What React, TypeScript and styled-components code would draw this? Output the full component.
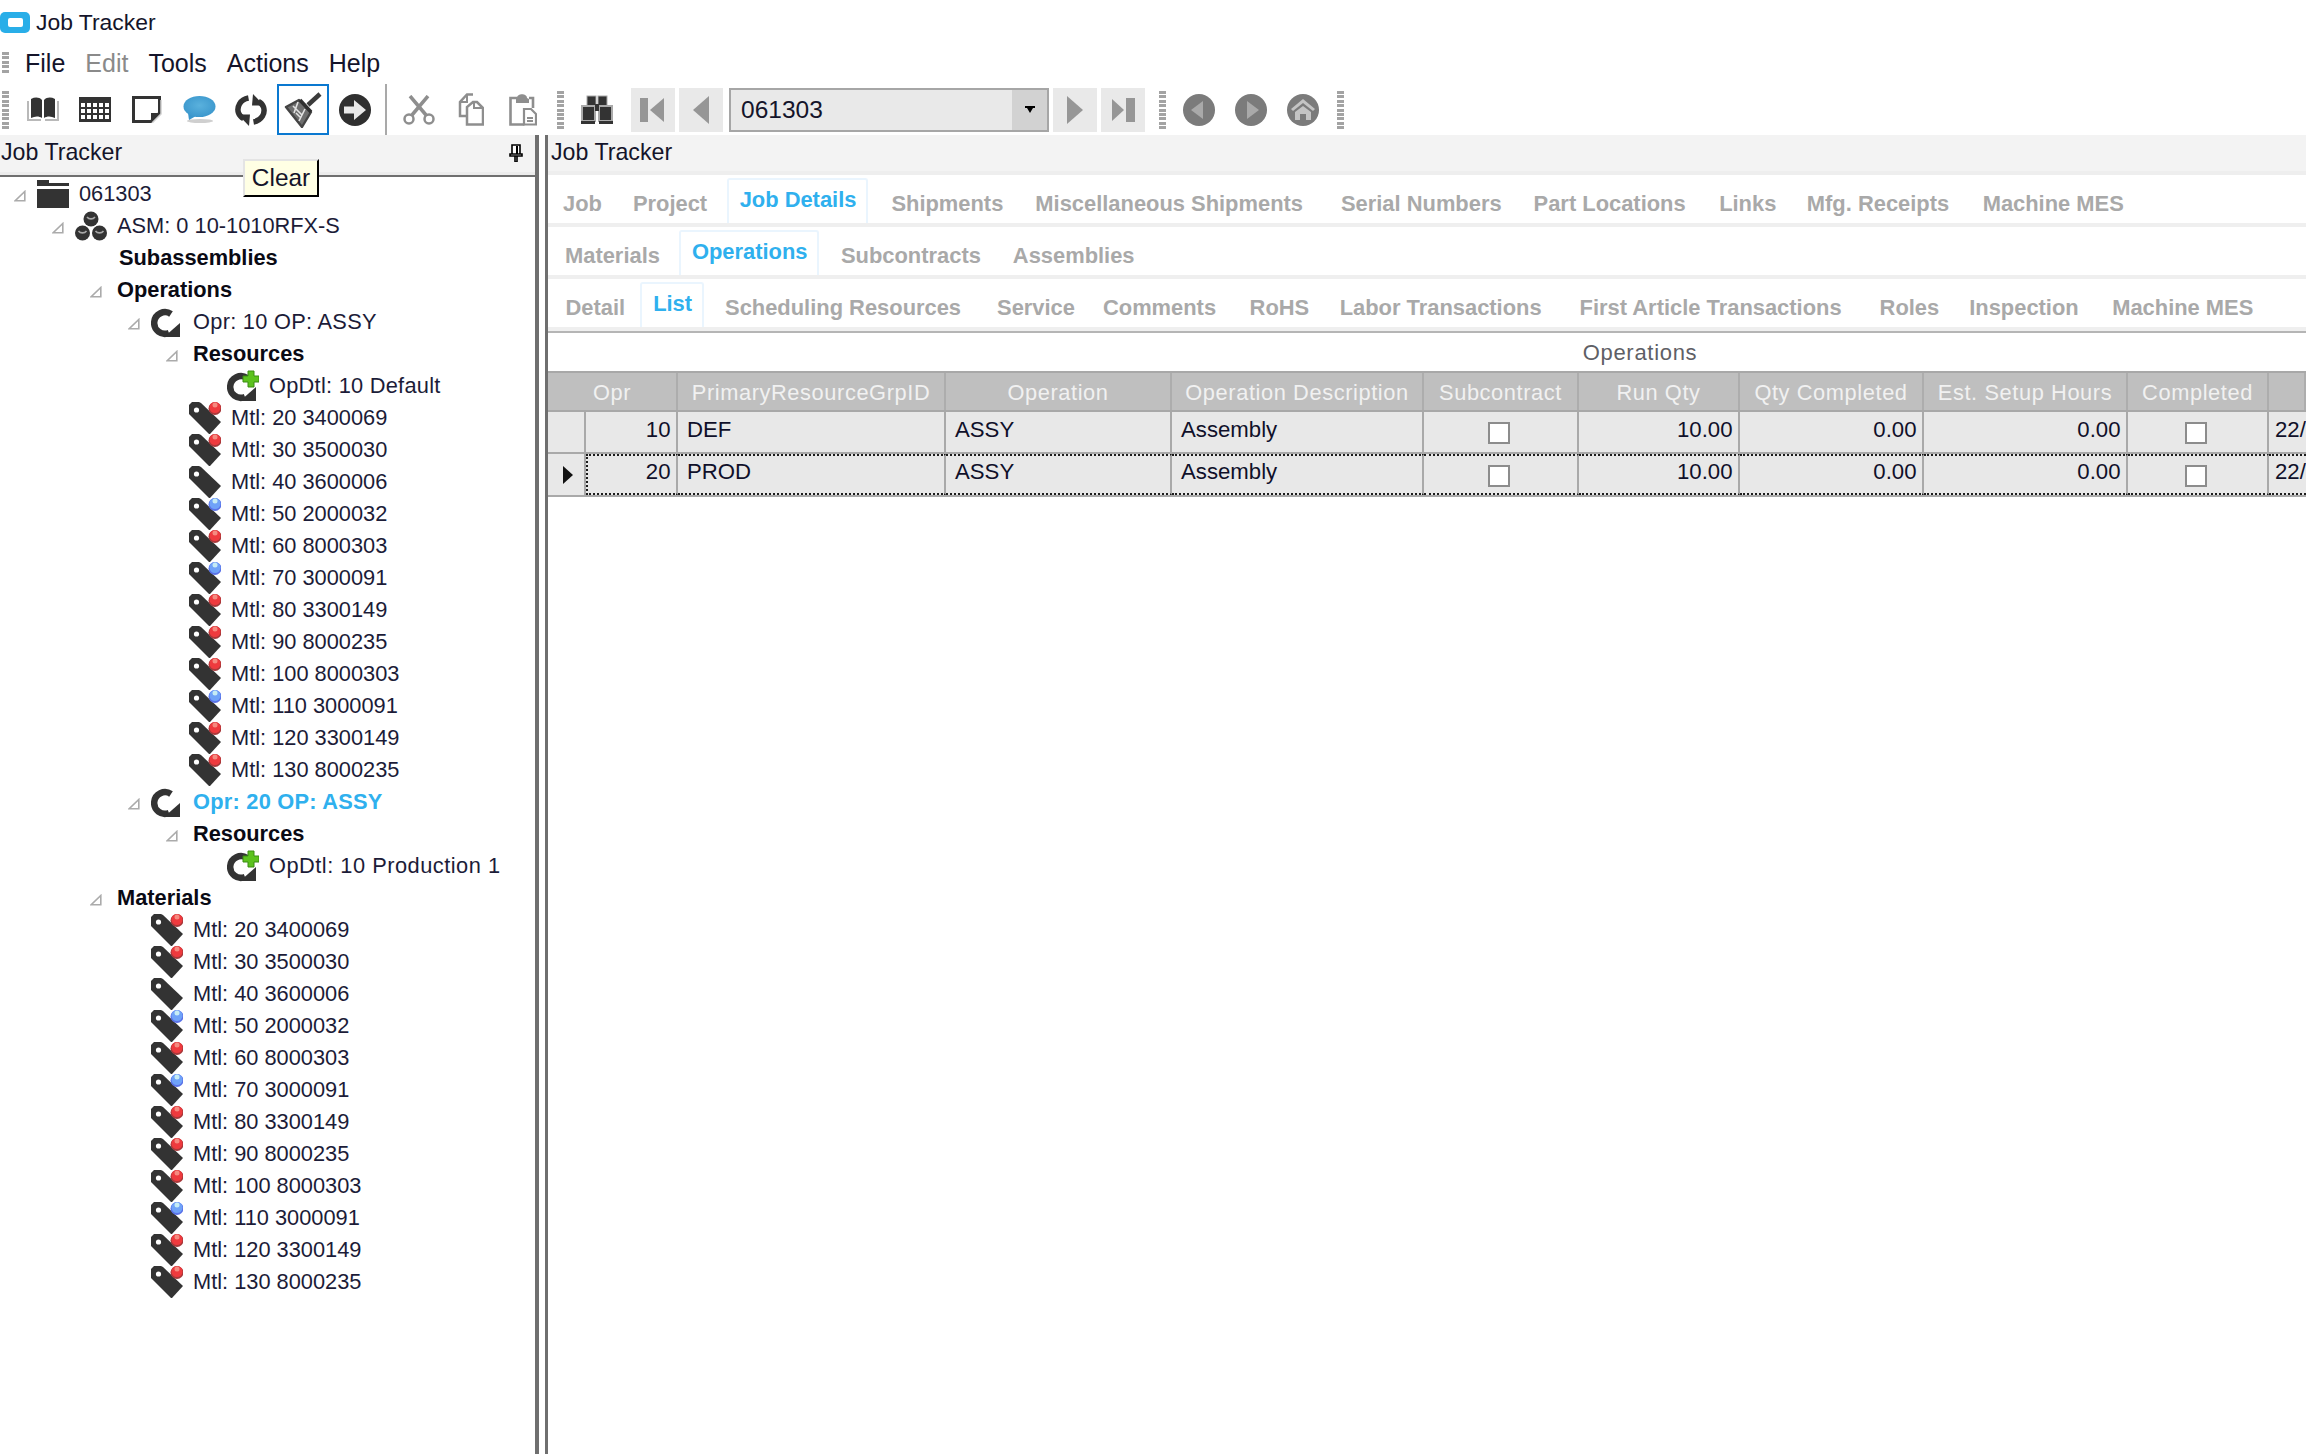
import React from 'react';
import styled, { createGlobalStyle, css } from 'styled-components';

type IconName = 'folder' | 'assembly' | 'opr' | 'opdtl' | 'mtl';
type Dot = 'red' | 'blue' | 'none';

interface TreeItem {
	level: number;
	text: string;
	icon?: IconName;
	dot?: Dot;
	bold?: boolean;
	active?: boolean;
	expander?: boolean;
	tracking?: number;
	indent?: number;
}

// label and the extra left margin the real tab strip leaves before it
type TabDef = [string, number];

const GlobalStyle = createGlobalStyle`
  html, body {
    margin: 0;
    padding: 0;
    height: 100%;
    background: #fff;
    overflow: hidden;
  }

  body {
    font-family: 'Liberation Sans', Arial, sans-serif;
    color: #14142a;
  }

  * {
    box-sizing: border-box;
  }
`;

const Page = styled.div`
	position: relative;
	width: 2306px;
	height: 1454px;
	display: flex;
	flex-direction: column;
	overflow: hidden;
`;

const TitleBar = styled.div`
	height: 41px;
	display: flex;
	align-items: center;
	gap: 6px;
	font-size: 22.9px;
	padding-top: 3px;
`;

const AppLogo = styled.div`
	width: 30px;
	height: 21px;
	border-radius: 5px;
	background: #29aee8;
	display: flex;
	align-items: center;
	justify-content: center;

	&::after {
		content: '';
		width: 15px;
		height: 9px;
		border-radius: 2px;
		background: #fff;
	}
`;

const MenuBar = styled.div`
	height: 43px;
	display: flex;
	align-items: center;
	padding: 1px 0 0 2px;
	font-size: 25px;
`;

const MenuItem = styled.span<{ $disabled?: boolean }>`
	padding: 0 10px;
	color: ${(p) => (p.$disabled ? '#8a8a8a' : '#14142a')};
`;

const Grip = styled.div<{ $short?: boolean }>`
	flex: none;
	width: 7px;
	height: ${(p) => (p.$short ? '22px' : '38px')};
	margin-right: ${(p) => (p.$short ? '6px' : '0')};
	background: repeating-linear-gradient(to bottom, #a3a3a3 0 3px, #fff 3px 4.4px);
`;

const Toolbar = styled.div`
	height: 51px;
	display: flex;
	align-items: center;
	padding-left: 2px;
`;

const ToolButton = styled.div<{ $selected?: boolean }>`
	flex: none;
	width: 52px;
	height: 51px;
	display: flex;
	align-items: center;
	justify-content: center;
	border: 2px solid ${(p) => (p.$selected ? '#0a78d0' : 'transparent')};
`;

const ToolGroup = styled.div<{ $left: number; $right?: number }>`
	display: flex;
	align-items: center;
	margin-left: ${(p) => p.$left}px;
	margin-right: ${(p) => p.$right ?? 0}px;
`;

const ToolSeparator = styled.div`
	flex: none;
	width: 2px;
	height: 51px;
	margin: 0 6px 0 4px;
	background: #a9a9a9;
`;

const NavButton = styled.div`
	flex: none;
	width: 44px;
	height: 44px;
	background: #e9e9e9;
	display: flex;
	align-items: center;
	justify-content: center;
`;

const Combo = styled.div`
	flex: none;
	width: 320px;
	height: 44px;
	margin: 0 4px 0 6px;
	border: 2px solid #a6a6a6;
	background: #e9e9e9;
	display: flex;
	align-items: stretch;
	font-size: 24.5px;
`;

const ComboValue = styled.div`
	flex: 1;
	padding-left: 10px;
	display: flex;
	align-items: center;
`;

const ComboArrow = styled.div`
	width: 35px;
	background: #d2d2d2;
	display: flex;
	align-items: center;
	justify-content: center;
`;

const Main = styled.div`
	flex: 1;
	display: flex;
	min-height: 0;
`;

const LeftPanel = styled.div`
	flex: none;
	width: 539px;
	border-right: 4px solid #6f6f6f;
	display: flex;
	flex-direction: column;
`;

const RightPanel = styled.div`
	flex: 1;
	min-width: 0;
	margin-left: 6px;
	border-left: 3px solid #6f6f6f;
	display: flex;
	flex-direction: column;
	overflow: hidden;
`;

const PaneHeader = styled.div<{ $dark?: boolean }>`
	flex: none;
	height: ${(p) => (p.$dark ? '42px' : '40px')};
	background: #f3f3f3;
	border-bottom: ${(p) => (p.$dark ? '2px solid #6f6f6f' : '4px solid #eeeeee')};
	box-shadow: ${(p) => (p.$dark ? 'inset 0 -3px 0 #ececec' : 'none')};
	display: flex;
	align-items: center;
	justify-content: space-between;
	padding: ${(p) => (p.$dark ? '0 12px 5px 1px' : '0 14px 2px 3px')};
	font-size: 23.2px;
	color: #14142a;
`;

const Tree = styled.div`
	flex: 1;
	display: flex;
	flex-direction: column;
	padding-top: 1px;
`;

const TreeRow = styled.div<{ $level: number }>`
	flex: none;
	height: 32px;
	display: flex;
	align-items: center;
	padding-left: ${(p) => p.$level * 38 + 14}px;
`;

const ExpanderSlot = styled.div`
	flex: none;
	width: 23px;
	padding-top: 4px;
	display: flex;
`;

const IconSlot = styled.div`
	flex: none;
	width: 42px;
	height: 32px;
	display: flex;
	align-items: center;
`;

const TreeLabel = styled.span<{ $bold?: boolean; $active?: boolean; $indent: number; $tracking: number }>`
	font-size: 21.8px;
	white-space: nowrap;
	margin-left: ${(p) => p.$indent}px;
	font-weight: ${(p) => (p.$bold || p.$active ? 700 : 400)};
	color: ${(p) => (p.$active ? '#2fb0ee' : p.$bold ? '#0a0a14' : '#1c1c38')};
	letter-spacing: ${(p) => p.$tracking}px;
`;

const TabRow = styled.div`
	flex: none;
	height: 52px;
	border-bottom: 4px solid #efefef;
	display: flex;
	align-items: flex-end;
`;

const Tab = styled.div<{ $selected?: boolean; $nudge: number }>`
	flex: none;
	height: 45px;
	font-size: 21.9px;
	font-weight: 700;
	white-space: nowrap;
	display: flex;
	align-items: center;
	${(p) =>
		p.$selected
			? css`
					padding: 0 10px 4px 11px;
					margin: 0 7px 0 ${5 + p.$nudge}px;
					color: #2fb0ee;
					border: 2px solid #eaf5fe;
					border-bottom: none;
					border-radius: 3px 3px 0 0;
			  `
			: css`
					padding: 6px 16px 0;
					margin-left: ${p.$nudge}px;
					color: #a9a9a9;
			  `}
`;

const GridSection = styled.div`
	border-top: 2px solid #b5b5b5;
	flex: 1;
	min-height: 0;
	overflow: hidden;
`;

const Caption = styled.div`
	width: 2184px;
	height: 38px;
	padding-top: 2px;
	display: flex;
	align-items: center;
	justify-content: center;
	font-size: 22px;
	letter-spacing: 0.7px;
	color: #5f5f66;
`;

const gridColumns = css`
	display: grid;
	grid-template-columns: 38px 92px 268px 226px 252px 155px 161px 184px 204px 141px 1fr;
`;

const HeaderRow = styled.div`
	${gridColumns};
	height: 41px;
	background: #bfbfbf;
	border-top: 2px solid #a8a8a8;
	border-bottom: 2px solid #a8a8a8;
`;

const HeaderCell = styled.div<{ $span?: number }>`
	grid-column: span ${(p) => p.$span ?? 1};
	display: flex;
	align-items: center;
	justify-content: center;
	padding-top: 2px;
	font-size: 21.8px;
	letter-spacing: 0.6px;
	color: #f1f1f1;
	white-space: nowrap;
	overflow: hidden;
	border-right: 2px solid #adadad;
`;

const DataRow = styled.div<{ $current?: boolean }>`
	${gridColumns};
	height: ${(p) => (p.$current ? '43px' : '42px')};
	background: #e8e8e8;
	border-bottom: 2px solid #a9a9a9;
`;

const RowHead = styled.div`
	display: flex;
	align-items: center;
	justify-content: center;
	border-right: 2px solid #a9a9a9;
	padding-left: 4px;
`;

const Cell = styled.div<{ $right?: boolean; $current?: boolean; $first?: boolean }>`
	display: flex;
	align-items: center;
	justify-content: ${(p) => (p.$right ? 'flex-end' : 'flex-start')};
	padding: 0 ${(p) => (p.$right ? '5.5px' : '10px')} 5px ${(p) => (p.$right ? '4px' : '9px')};
	font-size: 22.2px;
	color: #10102a;
	white-space: nowrap;
	overflow: hidden;
	border-right: 2px solid #a9a9a9;
	${(p) =>
		p.$current &&
		css`
			border-top: 2px dotted #1c1c1c;
			border-bottom: 2px dotted #1c1c1c;
		`}
	${(p) => p.$first && 'border-left: 2px dotted #1c1c1c;'}
`;

const CheckCell = styled(Cell)`
	justify-content: center;
	padding: 2px 3px 0 0;
`;

const EdgeCell = styled(Cell)`
	padding: 0 0 5px 6px;
	border-right: none;
`;

const CheckBox = styled.div`
	width: 22px;
	height: 22px;
	background: #fff;
	border: 2px solid #8c8c8c;
`;

const Tooltip = styled.div`
	position: absolute;
	left: 243px;
	top: 159px;
	width: 76px;
	height: 38px;
	background: #ffffe4;
	border-top: 2px solid #e4e4e4;
	border-left: 2px solid #e4e4e4;
	border-right: 2px solid #000;
	border-bottom: 2px solid #000;
	display: flex;
	align-items: center;
	justify-content: center;
	font-size: 24.4px;
	color: #14142a;
`;

const dark = '#333333';
const grey = '#8e8e8e';

const Dotted = ({ dot }: { dot?: Dot }) => {
	if (!dot || dot === 'none') return null;
	const red = dot === 'red';
	return (
		<>
			<circle cx="26" cy="6.5" r="6.5" fill={red ? '#a8383a' : '#5a72e8'} />
			<circle cx="26" cy="5.5" r="5.5" fill={red ? '#ee3a3e' : '#6fa2f8'} />
			<circle cx="26" cy="3" r="2.5" fill={red ? '#f58a80' : '#c6ecf4'} />
		</>
	);
};

const TreeIcon = ({ name, dot }: { name: IconName; dot?: Dot }) => {
	if (name === 'folder') {
		return (
			<svg width="32" height="28" viewBox="0 0 32 28">
				<path d="M0 0h12v3h20v3H0z" fill={dark} />
				<rect x="0" y="9" width="32" height="19" fill={dark} />
			</svg>
		);
	}
	if (name === 'assembly') {
		return (
			<svg width="32" height="30" viewBox="0 0 32 30">
				{[
					[16, 8],
					[7.5, 22],
					[24.5, 22],
				].map(([x, y]) => (
					<g key={x}>
						<circle cx={x} cy={y} r="7.5" fill={dark} />
						<path d={`M${x - 4} ${y - 2}c2 2.5 6 2.5 8 0`} fill="none" stroke="#a8a8a8" strokeWidth="1.6" />
					</g>
				))}
			</svg>
		);
	}
	if (name === 'mtl') {
		return (
			<svg width="32" height="32" viewBox="0 0 32 32">
				<path d="M3 0h7l2 1 20 19-11 12h-1L0 12V3z" fill={dark} />
				<circle cx="7.5" cy="8" r="2.6" fill="#fff" />
				<Dotted dot={dot} />
			</svg>
		);
	}
	return (
		<svg width="32" height="32" viewBox="0 0 32 32">
			<path d="M20 8A10.8 10.8 0 1 0 18 27" fill="none" stroke={dark} strokeWidth="6.5" />
			<path d="M29 17v14H13z" fill={dark} />
			{name === 'opdtl' && (
				<path d="M21 1h6v5h5v6h-5v5h-6v-5h-5V6h5z" fill="#5cc21e" stroke="#3a8c12" strokeWidth="1" />
			)}
		</svg>
	);
};

const Expander = () => (
	<svg width="12" height="12" viewBox="0 0 12 12">
		<path d="M10.8 1.5v9.3H1.2z" fill="#fff" stroke="#ababab" strokeWidth="1.6" />
	</svg>
);

const BookIcon = () => (
	<svg width="32" height="25" viewBox="0 0 32 25">
		<path d="M1 4v19h13" fill="none" stroke="#b9b9b9" strokeWidth="2" />
		<path d="M31 4v19H18" fill="none" stroke="#b9b9b9" strokeWidth="2" />
		<path d="M4 2c4-2 8-2 11 1v18c-3-2-7-2-11 0z" fill={dark} />
		<path d="M28 2c-4-2-8-2-11 1v18c3-2 7-2 11 0z" fill={dark} />
	</svg>
);

const GridIcon = () => (
	<svg width="32" height="25" viewBox="0 0 32 25">
		<rect width="32" height="25" fill={dark} />
		{[6, 12, 18].map((y) =>
			[2, 8, 14, 20, 26].map((x) => <rect key={`${x}-${y}`} x={x} y={y} width="4" height="4" fill="#fff" />),
		)}
	</svg>
);

const NoteIcon = () => (
	<svg width="30" height="27" viewBox="0 0 30 27">
		<path d="M1.5 1.5h26V17l-8.5 8.5H1.5z" fill="#fff" stroke={dark} strokeWidth="3" />
		<path d="M19 25v-8h9z" fill={dark} />
		<path d="M29 4v14l-9 9" fill="none" stroke="#d0d0d0" strokeWidth="1.5" />
	</svg>
);

const BubbleIcon = () => (
	<svg width="33" height="27" viewBox="0 0 33 27">
		<defs>
			<radialGradient id="bubble" cx="50%" cy="45%" r="60%">
				<stop offset="0%" stopColor="#5ab1dd" />
				<stop offset="100%" stopColor="#3a96cc" />
			</radialGradient>
		</defs>
		<ellipse cx="17" cy="25" rx="13" ry="2" fill="#cfcfcf" />
		<path d="M5 17l1 7 7-4z" fill="#3a96cc" />
		<ellipse cx="16.5" cy="10.5" rx="16" ry="10.5" fill="url(#bubble)" />
	</svg>
);

const RefreshIcon = () => (
	<svg width="32" height="32" viewBox="0 0 32 32">
		<path d="M13.5 4C5 5.500 1.500 13 3.500 19c1 2.500 3 4.500 5 5.500" fill="none" stroke={dark} strokeWidth="5.5" />
		<path d="M3 20.5h12L14 32z" fill={dark} />
		<path d="M18.5 28c8.500-1.500 12-9 10-15-1-2.500-3-4.500-5-5.500" fill="none" stroke={dark} strokeWidth="5.5" />
		<path d="M29 11.5H17L18 0z" fill={dark} />
	</svg>
);

const BroomIcon = () => (
	<svg width="38" height="37" viewBox="0 0 38 37">
		<path d="M36 3L24 14" stroke="#3b3b3b" strokeWidth="4.5" />
		<path d="M15 9l12 12-9 15L2 16z" fill="#6e6e6e" stroke="#444" strokeWidth="2.4" strokeLinejoin="round" />
		<path d="M9 15l9 9M12 22l5 5M14 11l-4 11M21 18L15 30" stroke="#e2e2e2" strokeWidth="1.6" />
		<path d="M16 9l11 12" stroke="#2f2f2f" strokeWidth="3.5" />
	</svg>
);

const ArrowCircleIcon = () => (
	<svg width="32" height="32" viewBox="0 0 32 32">
		<circle cx="16" cy="16" r="16" fill="#2f2f2f" />
		<path d="M5 12.5h10V6l12 10-12 10v-6.5H5z" fill="#e9e9e9" />
	</svg>
);

const ScissorsIcon = () => (
	<svg width="32" height="30" viewBox="0 0 32 30">
		<g fill="none" stroke={grey}>
			<circle cx="6" cy="24" r="4.5" strokeWidth="2.5" />
			<circle cx="26" cy="24" r="4.5" strokeWidth="2.5" />
			<path d="M9 20L25 1M23 20L7 1" strokeWidth="3.5" />
		</g>
	</svg>
);

const CopyIcon = () => (
	<svg width="26" height="33" viewBox="0 0 26 33">
		<path d="M15 1.5H9L2 9v14h6" fill="#fff" stroke={grey} strokeWidth="2.5" />
		<path d="M9 1.5V9H2" fill="none" stroke={grey} strokeWidth="2" />
		<path d="M15 9h4l6 6v16.5H9V14z" fill="#fff" stroke={grey} strokeWidth="2.5" />
		<path d="M16 9v6h9" fill="none" stroke={grey} strokeWidth="2" />
	</svg>
);

const PasteIcon = () => (
	<svg width="28" height="33" viewBox="0 0 28 33">
		<path d="M8 5H1.5v26.5h14M20 5h4v10" fill="none" stroke={grey} strokeWidth="2.6" />
		<path d="M8 5c0-5 10-5 10 0l2 1v4H7V6z" fill={grey} />
		<path d="M15 16h7l5 5v10.5H15z" fill="#fff" stroke={grey} strokeWidth="2.2" />
		<path d="M18 25h6M18 28h6" stroke={grey} strokeWidth="2" />
	</svg>
);

const BinocularsIcon = () => (
	<svg width="32" height="29" viewBox="0 0 32 29">
		<rect x="6" y="1" width="9" height="10" fill={dark} stroke="#aaa" strokeWidth="1" />
		<rect x="17" y="1" width="9" height="10" fill={dark} stroke="#aaa" strokeWidth="1" />
		<rect x="1" y="11" width="13" height="15" fill={dark} stroke="#aaa" strokeWidth="2" />
		<rect x="18" y="11" width="13" height="15" fill={dark} stroke="#aaa" strokeWidth="2" />
		<rect x="14" y="9" width="4" height="7" fill={dark} />
		<rect x="0" y="26" width="14" height="3" fill={dark} />
		<rect x="18" y="26" width="14" height="3" fill={dark} />
	</svg>
);

const NavIcon = ({ kind }: { kind: 'first' | 'prev' | 'next' | 'last' }) => (
	<svg width="26" height="28" viewBox="0 0 26 28">
		{kind === 'first' && (
			<>
				<rect x="0" y="2" width="8" height="24" fill="#969696" />
				<path d="M24 2v24L10 14z" fill="#969696" />
			</>
		)}
		{kind === 'prev' && <path d="M21 0v28L5 14z" fill="#969696" />}
		{kind === 'next' && <path d="M5 0v28l16-14z" fill="#969696" />}
		{kind === 'last' && (
			<>
				<path d="M2 3v22l12-11z" fill="#969696" />
				<rect x="16" y="2" width="9" height="24" fill="#969696" />
			</>
		)}
	</svg>
);

const RoundNav = ({ kind }: { kind: 'back' | 'forward' | 'home' }) => (
	<svg width="32" height="32" viewBox="0 0 32 32">
		<circle cx="16" cy="16" r="16" fill="#7b7b7b" />
		{kind === 'back' && <path d="M20 7v18L8 16z" fill="#a9a9a9" />}
		{kind === 'forward' && <path d="M12 7v18l12-9z" fill="#a9a9a9" />}
		{kind === 'home' && (
			<path d="M16 5L4 15l2 2 10-8 10 8 2-2zM8 18l8-6 8 6v8h-5v-6h-6v6H8z" fill="#c4c4c4" />
		)}
	</svg>
);

const ChevronDown = () => (
	<svg width="12" height="8" viewBox="0 0 12 8">
		<path d="M1 0h10v2H9L6 7 3 2H1z" fill="#000" />
	</svg>
);

const Pin = () => (
	<svg width="14" height="18" viewBox="0 0 14 18">
		<path d="M3 1h8v9H3zM1 10h12v2H1zM6 12h2v6H6z" fill="#fff" stroke="#000" strokeWidth="1.6" />
		<path d="M8 2v8" stroke="#000" strokeWidth="2" />
	</svg>
);

const RowArrow = () => (
	<svg width="10" height="18" viewBox="0 0 10 18">
		<path d="M0 0l10 9-10 9z" fill="#111" />
	</svg>
);

const materials: [string, Dot][] = [
	['20 3400069', 'red'],
	['30 3500030', 'red'],
	['40 3600006', 'none'],
	['50 2000032', 'blue'],
	['60 8000303', 'red'],
	['70 3000091', 'blue'],
	['80 3300149', 'red'],
	['90 8000235', 'red'],
	['100 8000303', 'red'],
	['110 3000091', 'blue'],
	['120 3300149', 'red'],
	['130 8000235', 'red'],
];

const mtlRows = (level: number): TreeItem[] =>
	materials.map(([text, dot]) => ({ level, text: `Mtl: ${text}`, icon: 'mtl', dot }));

const tree: TreeItem[] = [
	{ level: 0, text: '061303', icon: 'folder', expander: true },
	{ level: 1, text: 'ASM: 0 10-1010RFX-S', icon: 'assembly', expander: true },
	{ level: 2, text: 'Subassemblies', bold: true, indent: 6 },
	{ level: 2, text: 'Operations', bold: true, expander: true },
	{ level: 3, text: 'Opr: 10 OP: ASSY', icon: 'opr', expander: true, tracking: 0.28 },
	{ level: 4, text: 'Resources', bold: true, expander: true },
	{ level: 5, text: 'OpDtl: 10 Default', icon: 'opdtl', tracking: 0.26 },
	...mtlRows(4),
	{ level: 3, text: 'Opr: 20 OP: ASSY', icon: 'opr', expander: true, active: true, tracking: 0.24 },
	{ level: 4, text: 'Resources', bold: true, expander: true },
	{ level: 5, text: 'OpDtl: 10 Production 1', icon: 'opdtl', tracking: 0.5 },
	{ level: 2, text: 'Materials', bold: true, expander: true },
	...mtlRows(3),
];

const topTabs: TabDef[] = [
	['Job', -1],
	['Project', -1],
	['Job Details', -1.5],
	['Shipments', 0],
	['Miscellaneous Shipments', 0],
	['Serial Numbers', 6],
	['Part Locations', 0],
	['Links', 1.5],
	['Mfg. Receipts', -1.5],
	['Machine MES', 1.5],
];

const midTabs: TabDef[] = [
	['Materials', 1],
	['Operations', -2],
	['Subcontracts', -1.5],
	['Assemblies', 0],
];

const lowTabs: TabDef[] = [
	['Detail', 1.5],
	['List', -6],
	['Scheduling Resources', -2],
	['Service', 4],
	['Comments', -4],
	['RoHS', 1.5],
	['Labor Transactions', -1.5],
	['First Article Transactions', 6],
	['Roles', 6],
	['Inspection', -2],
	['Machine MES', 1.5],
];

const columns = ['PrimaryResourceGrpID', 'Operation', 'Operation Description', 'Subcontract', 'Run Qty', 'Qty Completed', 'Est. Setup Hours', 'Completed'];

const rows = [
	{ opr: '10', group: 'DEF', current: false },
	{ opr: '20', group: 'PROD', current: true },
];

const TabStrip = ({ tabs, selected }: { tabs: TabDef[]; selected: string }) => (
	<TabRow>
		{tabs.map(([label, nudge]) => (
			<Tab key={label} $selected={label === selected} $nudge={nudge}>
				{label}
			</Tab>
		))}
	</TabRow>
);

const App = () => (
	<Page>
		<GlobalStyle />
		<TitleBar>
			<AppLogo />
			Job Tracker
		</TitleBar>
		<MenuBar>
			<Grip $short />
			<MenuItem>File</MenuItem>
			<MenuItem $disabled>Edit</MenuItem>
			<MenuItem>Tools</MenuItem>
			<MenuItem>Actions</MenuItem>
			<MenuItem>Help</MenuItem>
		</MenuBar>
		<Toolbar>
			<Grip />
			<ToolGroup $left={8}>
				<ToolButton><BookIcon /></ToolButton>
				<ToolButton><GridIcon /></ToolButton>
				<ToolButton><NoteIcon /></ToolButton>
				<ToolButton><BubbleIcon /></ToolButton>
				<ToolButton><RefreshIcon /></ToolButton>
				<ToolButton $selected><BroomIcon /></ToolButton>
				<ToolButton><ArrowCircleIcon /></ToolButton>
			</ToolGroup>
			<ToolSeparator />
			<ToolButton><ScissorsIcon /></ToolButton>
			<ToolButton><CopyIcon /></ToolButton>
			<ToolButton><PasteIcon /></ToolButton>
			<ToolGroup $left={8} $right={7}>
				<Grip />
			</ToolGroup>
			<ToolButton><BinocularsIcon /></ToolButton>
			<ToolGroup $left={8}>
				<NavButton><NavIcon kind="first" /></NavButton>
			</ToolGroup>
			<ToolGroup $left={4}>
				<NavButton><NavIcon kind="prev" /></NavButton>
			</ToolGroup>
			<Combo>
				<ComboValue>061303</ComboValue>
				<ComboArrow><ChevronDown /></ComboArrow>
			</Combo>
			<NavButton><NavIcon kind="next" /></NavButton>
			<ToolGroup $left={4}>
				<NavButton><NavIcon kind="last" /></NavButton>
			</ToolGroup>
			<ToolGroup $left={14} $right={7}>
				<Grip />
			</ToolGroup>
			<ToolButton><RoundNav kind="back" /></ToolButton>
			<ToolButton><RoundNav kind="forward" /></ToolButton>
			<ToolButton><RoundNav kind="home" /></ToolButton>
			<ToolGroup $left={8}>
				<Grip />
			</ToolGroup>
		</Toolbar>
		<Main>
			<LeftPanel>
				<PaneHeader $dark>
					Job Tracker
					<Pin />
				</PaneHeader>
				<Tree>
					{tree.map((item, i) => (
						<TreeRow key={i} $level={item.level}>
							<ExpanderSlot>{item.expander && <Expander />}</ExpanderSlot>
							{item.icon && (
								<IconSlot>
									<TreeIcon name={item.icon} dot={item.dot} />
								</IconSlot>
							)}
							<TreeLabel
								$bold={item.bold}
								$active={item.active}
								$indent={item.indent ?? (item.icon ? 0 : 4)}
								$tracking={item.tracking ?? 0}
							>
								{item.text}
							</TreeLabel>
						</TreeRow>
					))}
				</Tree>
			</LeftPanel>
			<RightPanel>
				<PaneHeader>Job Tracker</PaneHeader>
				<TabStrip tabs={topTabs} selected="Job Details" />
				<TabStrip tabs={midTabs} selected="Operations" />
				<TabStrip tabs={lowTabs} selected="List" />
				<GridSection>
					<Caption>Operations</Caption>
					<HeaderRow>
						<HeaderCell $span={2}>Opr</HeaderCell>
						{columns.map((c) => (
							<HeaderCell key={c}>{c}</HeaderCell>
						))}
						<HeaderCell />
					</HeaderRow>
					{rows.map((r) => (
						<DataRow key={r.opr} $current={r.current}>
							<RowHead>{r.current && <RowArrow />}</RowHead>
							<Cell $right $current={r.current} $first={r.current}>{r.opr}</Cell>
							<Cell $current={r.current}>{r.group}</Cell>
							<Cell $current={r.current}>ASSY</Cell>
							<Cell $current={r.current}>Assembly</Cell>
							<CheckCell $current={r.current}><CheckBox /></CheckCell>
							<Cell $right $current={r.current}>10.00</Cell>
							<Cell $right $current={r.current}>0.00</Cell>
							<Cell $right $current={r.current}>0.00</Cell>
							<CheckCell $current={r.current}><CheckBox /></CheckCell>
							<EdgeCell $current={r.current}>22/</EdgeCell>
						</DataRow>
					))}
				</GridSection>
			</RightPanel>
		</Main>
		<Tooltip>Clear</Tooltip>
	</Page>
);

export default App;
